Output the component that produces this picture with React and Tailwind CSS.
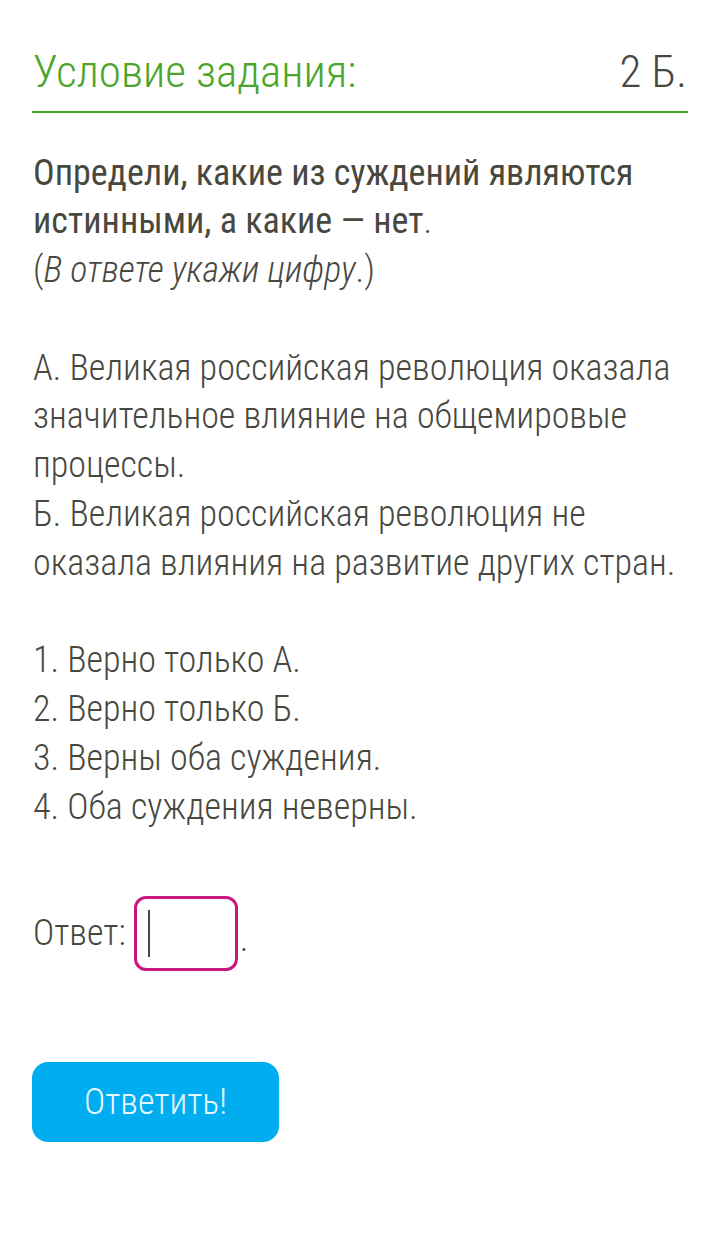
import React from "react";

export default function App() {
  return (
    <div className="min-h-[1233px] bg-white px-[32px] font-['Roboto_Condensed',Roboto,sans-serif] text-[#48483f]">
      {/* заголовок */}
      <div className="flex items-baseline justify-between border-b-2 border-[#4ba52a] pt-[45.5px] pb-[13.5px] text-[45px] leading-[52px] font-light">
        <span className="pl-px text-[#4ba52a]">Условие задания:</span>
        <span className="pr-[1px]">2 Б.</span>
      </div>

      {/* текст задания */}
      <div className="mt-[35.5px] pl-px text-[36px] leading-[48.8px] font-light">
        <span className="font-normal">
          Определи, какие из суждений являются
          <br />
          истинными, а какие — нет
        </span>
        .
        <br />
        (<i>В ответе укажи цифру</i>.)
        <br />
        <br />
        А. Великая российская революция оказала
        <br />
        значительное влияние на общемировые
        <br />
        процессы.
        <br />
        Б. Великая российская революция не
        <br />
        оказала влияния на развитие других стран.
        <br />
        <br />
        1. Верно только А.
        <br />
        2. Верно только Б.
        <br />
        3. Верны оба суждения.
        <br />
        4. Оба суждения неверны.
      </div>

      {/* поле ответа */}
      <div className="mt-[64px] flex items-center pl-px text-[36px] font-light">
        <span>Ответ:</span>
        <div className="ml-[8px] flex h-[75px] w-[104px] items-center rounded-[12px] border-[3px] border-[#c8177f] pl-[11px]">
          <div className="h-[47px] w-[2px] bg-[#48483f]" />
        </div>
        <span className="ml-[2px] self-end pb-[14px] leading-none">.</span>
      </div>

      <button className="mt-[91px] flex h-[80px] w-[247px] items-center justify-center rounded-[16px] bg-[#00aeef] text-[36px] font-light text-[#e6f8ff]">
        Ответить!
      </button>
    </div>
  );
}
